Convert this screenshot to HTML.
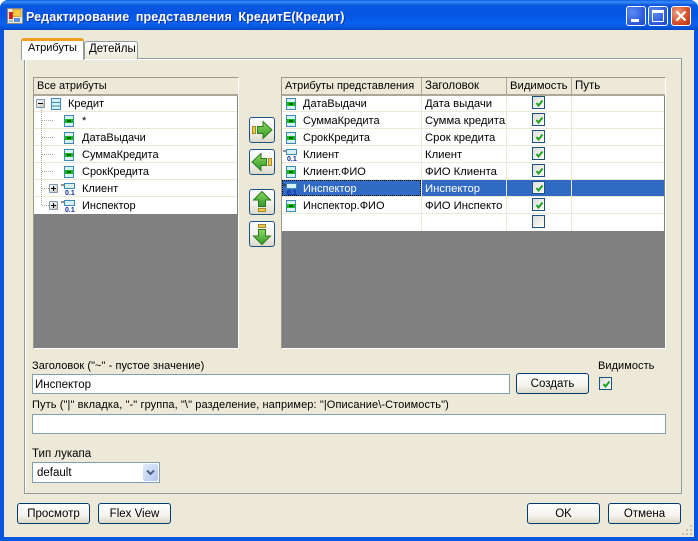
<!DOCTYPE html>
<html><head><meta charset="utf-8">
<style>
html,body{margin:0;padding:0;width:698px;height:541px;overflow:hidden;background:#fff}
*{box-sizing:border-box}
#w{position:relative;width:698px;height:541px;overflow:hidden;font:11px "Liberation Sans",sans-serif;color:#000;background:#0855dd;border-radius:8px 8px 0 0}
.a{position:absolute}
.t{position:absolute;white-space:nowrap;line-height:13px;height:13px}
.btn{position:absolute;border:1px solid #003c74;border-radius:3px;background:linear-gradient(#fff,#f4f3ee 60%,#dcd8c8);text-align:center;line-height:21px;font-size:11.5px}
.inp{position:absolute;background:#fff;border:1px solid #7f9db9;line-height:20px;padding-left:2px;font-size:11.5px}
.cb{position:absolute;width:13px;height:13px;border:1px solid #1c5180;background:linear-gradient(135deg,#dcdcd7,#fff)}
.cb svg{position:absolute;left:1px;top:1px}
.g{position:absolute;background:#808080;border:1px solid;border-color:#9d9a8c #fff #fff #9d9a8c}
.h{position:absolute;background:#ece9d8;border-bottom:2px solid #aca899;height:18px;font-size:11px;line-height:17px;padding-left:3px;white-space:nowrap}
.r{position:absolute;background:#fff;border-bottom:1px solid #ece9d8;height:17px}
.v{position:absolute;width:1px;background:#ece9d8}
.x{position:absolute;font-size:11px;line-height:13px;white-space:nowrap}
.y{position:absolute;font-size:11.3px;line-height:13px;white-space:nowrap}
.ab{position:absolute;width:26px;height:26px;border:1px solid #1c5180;border-radius:3px;background:linear-gradient(#fff,#f1f0ea 60%,#dcd8c8)}
.ab svg{position:absolute;left:0;top:0}
.tb{position:absolute;top:6px;width:20px;height:20px;border:1px solid #fff;border-radius:3px;background:radial-gradient(circle at 30% 30%,#5c8cf0,#2f5fe0 60%,#1c44c4)}
.ic{position:absolute}
.pm{position:absolute;width:9px;height:9px;border:1px solid #7a98af;border-radius:1px;background:linear-gradient(135deg,#fff,#c8c4b4)}
.pm:before{content:"";position:absolute;left:1px;top:3px;width:5px;height:1px;background:#000}
.pm.p:after{content:"";position:absolute;left:3px;top:1px;width:1px;height:5px;background:#000}
.dv{position:absolute;width:1px;background-image:linear-gradient(#aca899 50%,transparent 50%);background-size:1px 2px}
.dh{position:absolute;height:1px;background-image:linear-gradient(90deg,#aca899 50%,transparent 50%);background-size:2px 1px}
.n{position:absolute;font:bold 7px/7px "Liberation Sans",sans-serif;color:#0a2a9c}
</style></head><body>
<svg width="0" height="0" style="position:absolute">
<defs>
<symbol id="at" viewBox="0 0 10 12"><rect x=".5" y=".5" width="9" height="11" fill="#d8f0f8" stroke="#3a8ab5"/><rect x="1" y="4" width="8" height="4" fill="#10c010"/><rect x="3" y="5.500" width="4" height="1" fill="#000"/></symbol>
<symbol id="cl" viewBox="0 0 10 12"><rect x=".5" y=".5" width="9" height="11" fill="#d8f0f8" stroke="#3a8ab5"/><path d="M1 4.500H9M1 8H9" stroke="#3a8ab5"/></symbol>
<symbol id="ln" viewBox="0 0 14 6"><path d="M0 2H3" stroke="#222"/><rect x="3.500" y=".5" width="10" height="5" fill="#d8f0f8" stroke="#3a8ab5"/></symbol>
<symbol id="ck" viewBox="0 0 11 11"><path d="M2.500 5L4.500 7.500L8.500 2.500" fill="none" stroke="#21a121" stroke-width="2"/></symbol>
<linearGradient id="gg" x1="0" y1="0" x2="0" y2="1"><stop offset="0" stop-color="#8fd860"/><stop offset="1" stop-color="#2f9a28"/></linearGradient>
</defs>
</svg>
<div id="w">
<!-- title -->
<div class="a" style="left:0;top:0;width:698px;height:30px;background:linear-gradient(#0a5fe8 0,#3c8cf8 2px,#0a58e0 5px,#0554e2 14px,#0a62f0 24px,#0453d8 28px,#0246c4 30px);border-radius:8px 8px 0 0"></div>
<svg class="a" style="left:7px;top:8px" width="16" height="16" viewBox="0 0 16 16"><rect x=".5" y=".5" width="15" height="15" fill="#ece9d8" stroke="#8a8a80"/><rect x="2" y="4" width="4" height="7" fill="#d02020"/><rect x="6" y="1.500" width="8" height="7" fill="#f8c840" stroke="#b08820" stroke-width=".6"/><rect x="7" y="10" width="6" height="4" fill="#5c90e0"/><rect x="2" y="12" width="4" height="2" fill="#a0b8d0"/></svg>
<div class="t" style="left:26px;top:10px;height:15px;line-height:15px;color:#fff;font-weight:bold;font-size:12.5px;letter-spacing:.1px;word-spacing:3px;text-shadow:1px 1px 0 #0a2fa8">Редактирование представления КредитЕ(Кредит)</div>
<div class="tb" style="left:626px"><div class="a" style="left:4px;top:12px;width:8px;height:3px;background:#fff"></div></div>
<div class="tb" style="left:648px"><div class="a" style="left:3px;top:3px;width:12px;height:12px;border:1px solid #fff;border-top:3px solid #fff"></div></div>
<div class="tb" style="left:671px;background:radial-gradient(circle at 30% 30%,#e8a080,#d8542c 55%,#b83010)"><svg class="a" style="left:3px;top:3px" width="12" height="12" viewBox="0 0 12 12"><path d="M1.500 1.500L10.500 10.500M10.500 1.500L1.500 10.500" stroke="#fff" stroke-width="2.200"/></svg></div>
<!-- client -->
<div class="a" style="left:4px;top:30px;width:690px;height:507px;background:#ece9d8"></div>
<!-- tab panel -->
<div class="a" style="left:24px;top:58px;width:658px;height:436px;background:#ece9d8;border:1px solid #919b9c;box-shadow:inset 1px 1px 0 #fff"></div>
<div class="a" style="left:84px;top:41px;width:54px;height:18px;background:linear-gradient(#fff,#ece9d8);border:1px solid #919b9c;border-bottom:0;border-radius:3px 3px 0 0"></div>
<div class="t" style="left:89px;top:43px;font-size:11.500px">Детейлы</div>
<div class="a" style="left:21px;top:38px;width:63px;height:22px;background:#fff;border:1px solid #919b9c;border-bottom:0;border-top:0;border-radius:3px 3px 0 0"></div>
<div class="a" style="left:21px;top:38px;width:63px;height:3px;background:#f0a020;border-radius:3px 3px 0 0"></div>
<div class="t" style="left:28px;top:42px;font-size:11px">Атрибуты</div>

<!-- left grid -->
<div class="g" style="left:33px;top:77px;width:206px;height:272px"></div>
<div class="h" style="left:34px;top:78px;width:204px">Все атрибуты</div>
<div class="r" style="left:34px;top:96px;width:203px;height:16px"></div>
<div class="r" style="left:34px;top:112px;width:203px"></div>
<div class="r" style="left:34px;top:129px;width:203px"></div>
<div class="r" style="left:34px;top:146px;width:203px"></div>
<div class="r" style="left:34px;top:163px;width:203px"></div>
<div class="r" style="left:34px;top:180px;width:203px"></div>
<div class="r" style="left:34px;top:197px;width:203px;height:17px;border-bottom:0"></div>

<div class="dv" style="left:41px;top:108px;height:97px"></div>
<div class="dh" style="left:42px;top:120px;height:1px;width:12px"></div>
<div class="dh" style="left:42px;top:137px;width:12px"></div>
<div class="dh" style="left:42px;top:154px;width:12px"></div>
<div class="dh" style="left:42px;top:171px;width:12px"></div>
<div class="dh" style="left:42px;top:188px;width:8px"></div>
<div class="dh" style="left:42px;top:205px;width:8px"></div>
<div class="pm" style="left:36px;top:99px"></div>
<div class="pm p" style="left:49px;top:184px"></div>
<div class="pm p" style="left:49px;top:201px"></div>
<svg class="ic" style="left:51px;top:98px" width="10" height="12"><use href="#cl"/></svg>
<svg class="ic" style="left:64px;top:115px" width="10" height="12"><use href="#at"/></svg>
<svg class="ic" style="left:64px;top:132px" width="10" height="12"><use href="#at"/></svg>
<svg class="ic" style="left:64px;top:149px" width="10" height="12"><use href="#at"/></svg>
<svg class="ic" style="left:64px;top:166px" width="10" height="12"><use href="#at"/></svg>
<svg class="ic" style="left:61px;top:183px" width="14" height="6"><use href="#ln"/></svg><div class="n" style="left:65px;top:190px">0.1</div>
<svg class="ic" style="left:61px;top:200px" width="14" height="6"><use href="#ln"/></svg><div class="n" style="left:65px;top:207px">0.1</div>
<div class="x" style="left:68px;top:98px">Кредит</div>
<div class="x" style="left:82px;top:115px">*</div>
<div class="x" style="left:82px;top:132px">ДатаВыдачи</div>
<div class="x" style="left:82px;top:149px">СуммаКредита</div>
<div class="x" style="left:82px;top:166px">СрокКредита</div>
<div class="x" style="left:82px;top:183px">Клиент</div>
<div class="x" style="left:82px;top:200px">Инспектор</div>

<!-- arrow buttons -->
<div class="ab" style="left:249px;top:117px"><svg width="24" height="24" viewBox="0 0 24 24"><rect x="2.500" y="8.500" width="3" height="7" fill="#f0c850" stroke="#a88828"/><path d="M7.500 8.500H13V3.500L22 12L13 20.500V15.500H7.500Z" fill="url(#gg)" stroke="#2c7a20"/></svg></div>
<div class="ab" style="left:249px;top:149px"><svg width="24" height="24" viewBox="0 0 24 24"><rect x="18.500" y="8.500" width="3" height="7" fill="#f0c850" stroke="#a88828"/><path d="M16.500 8.500H11V3.500L2 12L11 20.500V15.500H16.500Z" fill="url(#gg)" stroke="#2c7a20"/></svg></div>
<div class="ab" style="left:249px;top:189px"><svg width="24" height="24" viewBox="0 0 24 24"><path d="M8.500 16.500V10H3.500L12 1.500L20.500 10H15.500V16.500Z" fill="url(#gg)" stroke="#2c7a20"/><rect x="8.500" y="18.500" width="7" height="3" fill="#f0c850" stroke="#a88828"/></svg></div>
<div class="ab" style="left:249px;top:221px"><svg width="24" height="24" viewBox="0 0 24 24"><rect x="8.500" y="2.500" width="7" height="3" fill="#f0c850" stroke="#a88828"/><path d="M8.500 7.500V14H3.500L12 22.500L20.500 14H15.500V7.500Z" fill="url(#gg)" stroke="#2c7a20"/></svg></div>

<!-- right grid -->
<div class="g" style="left:281px;top:77px;width:385px;height:272px"></div>
<div class="h" style="left:282px;top:78px;width:140px;border-right:1px solid #aca899">Атрибуты представления</div>
<div class="h" style="left:422px;top:78px;width:85px;border-right:1px solid #aca899;font-size:11.500px">Заголовок</div>
<div class="h" style="left:507px;top:78px;width:65px;border-right:1px solid #aca899;font-size:11.300px">Видимость</div>
<div class="h" style="left:572px;top:78px;width:93px;font-size:11.500px">Путь</div>
<div class="r" style="left:282px;top:96px;width:382px;height:16px"></div>
<div class="r" style="left:282px;top:112px;width:382px"></div>
<div class="r" style="left:282px;top:129px;width:382px"></div>
<div class="r" style="left:282px;top:146px;width:382px"></div>
<div class="r" style="left:282px;top:163px;width:382px"></div>
<div class="r" style="left:282px;top:180px;width:382px;background:#316ac5"></div>
<div class="r" style="left:282px;top:197px;width:382px"></div>
<div class="r" style="left:282px;top:214px;width:382px;border-bottom:0"></div>
<div class="v" style="left:421px;top:96px;height:135px"></div>
<div class="v" style="left:506px;top:96px;height:135px"></div>
<div class="v" style="left:571px;top:96px;height:135px"></div>
<div class="a" style="left:282px;top:180px;width:139px;height:16px;outline:1px dotted #000;outline-offset:-1px"></div>

<svg class="ic" style="left:286px;top:98px" width="10" height="12"><use href="#at"/></svg>
<svg class="ic" style="left:286px;top:115px" width="10" height="12"><use href="#at"/></svg>
<svg class="ic" style="left:286px;top:132px" width="10" height="12"><use href="#at"/></svg>
<svg class="ic" style="left:283px;top:149px" width="14" height="6"><use href="#ln"/></svg><div class="n" style="left:287px;top:156px">0.1</div>
<svg class="ic" style="left:286px;top:166px" width="10" height="12"><use href="#at"/></svg>
<svg class="ic" style="left:283px;top:183px" width="14" height="6"><use href="#ln"/></svg><div class="n" style="left:287px;top:190px">0.1</div>
<svg class="ic" style="left:286px;top:200px" width="10" height="12"><use href="#at"/></svg>

<div class="x" style="left:303px;top:98px">ДатаВыдачи</div><div class="y" style="left:425px;top:98px">Дата выдачи</div>
<div class="x" style="left:303px;top:115px">СуммаКредита</div><div class="y" style="left:425px;top:115px">Сумма кредита</div>
<div class="x" style="left:303px;top:132px">СрокКредита</div><div class="y" style="left:425px;top:132px">Срок кредита</div>
<div class="x" style="left:303px;top:149px">Клиент</div><div class="y" style="left:425px;top:149px">Клиент</div>
<div class="x" style="left:303px;top:166px">Клиент.ФИО</div><div class="y" style="left:425px;top:166px">ФИО Клиента</div>
<div class="x" style="left:303px;top:183px;color:#fff">Инспектор</div><div class="y" style="left:425px;top:183px;color:#fff">Инспектор</div>
<div class="x" style="left:303px;top:200px">Инспектор.ФИО</div><div class="y" style="left:425px;top:200px;width:80px;overflow:hidden">ФИО Инспекто</div>

<div class="cb" style="left:532px;top:96px"><svg width="11" height="11"><use href="#ck"/></svg></div>
<div class="cb" style="left:532px;top:113px"><svg width="11" height="11"><use href="#ck"/></svg></div>
<div class="cb" style="left:532px;top:130px"><svg width="11" height="11"><use href="#ck"/></svg></div>
<div class="cb" style="left:532px;top:147px"><svg width="11" height="11"><use href="#ck"/></svg></div>
<div class="cb" style="left:532px;top:164px"><svg width="11" height="11"><use href="#ck"/></svg></div>
<div class="cb" style="left:532px;top:181px"><svg width="11" height="11"><use href="#ck"/></svg></div>
<div class="cb" style="left:532px;top:198px"><svg width="11" height="11"><use href="#ck"/></svg></div>
<div class="cb" style="left:532px;top:215px"></div>

<!-- form -->
<div class="t" style="left:32px;top:360px;letter-spacing:.06px">Заголовок ("~" - пустое значение)</div>
<div class="inp" style="left:32px;top:374px;width:478px;height:20px">Инспектор</div>
<div class="btn" style="left:516px;top:373px;width:73px;height:21px">Создать</div>
<div class="t" style="left:598px;top:360px;font-size:11px;letter-spacing:.05px">Видимость</div>
<div class="cb" style="left:599px;top:377px"><svg width="11" height="11"><use href="#ck"/></svg></div>
<div class="t" style="left:32px;top:399px;letter-spacing:.1px">Путь ("|" вкладка, "-" группа, "\" разделение, например: "|Описание\-Стоимость")</div>
<div class="inp" style="left:32px;top:414px;width:634px;height:20px"></div>
<div class="t" style="left:32px;top:448px;font-size:11.500px">Тип лукапа</div>
<div class="inp" style="left:32px;top:462px;width:128px;height:21px;padding-left:4px;line-height:21px">default</div>
<div class="a" style="left:143px;top:464px;width:15px;height:17px;background:linear-gradient(135deg,#e4ecfc,#b0c4f0);border-radius:2px"><svg class="a" style="left:3px;top:5px" width="9" height="7" viewBox="0 0 9 7"><path d="M1 1.500L4.500 5L8 1.500" fill="none" stroke="#4d6185" stroke-width="2"/></svg></div>

<div class="btn" style="left:17px;top:503px;width:73px;height:21px">Просмотр</div>
<div class="btn" style="left:98px;top:503px;width:73px;height:21px">Flex View</div>
<div class="btn" style="left:527px;top:503px;width:73px;height:21px">OK</div>
<div class="btn" style="left:608px;top:503px;width:73px;height:21px">Отмена</div>
<!-- grip -->
<svg class="a" style="left:682px;top:525px" width="12" height="12"><g fill="#c4c1b0"><rect x="8" y="0" width="2" height="2"/><rect x="4" y="4" width="2" height="2"/><rect x="8" y="4" width="2" height="2"/><rect x="0" y="8" width="2" height="2"/><rect x="4" y="8" width="2" height="2"/><rect x="8" y="8" width="2" height="2"/></g></svg>
</div>
</body></html>
